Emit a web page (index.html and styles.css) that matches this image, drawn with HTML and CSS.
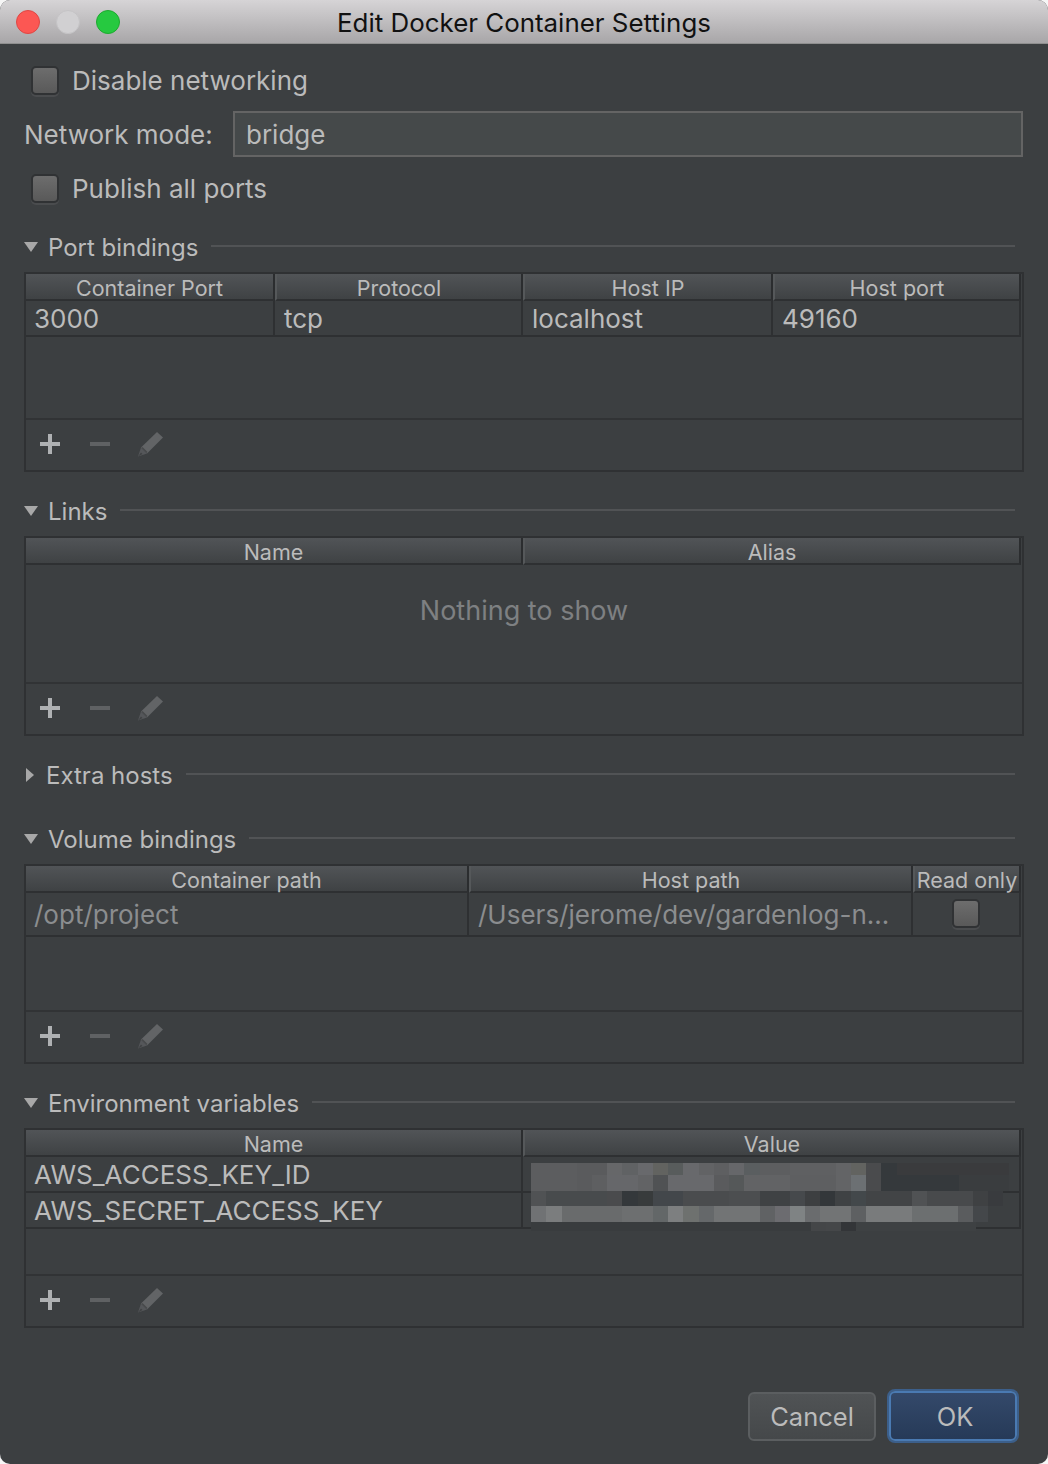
FILE: index.html
```html
<!DOCTYPE html>
<html>
<head>
<title>Edit Docker Container Settings</title>
<link rel="stylesheet" href="styles.css">
</head>

<body>
<svg width="0" height="0" class="defs">
	<symbol id="ic-plus" viewBox="0 0 22 22"><path d="M9 1h4v8h8v4h-8v8H9v-8H1V9h8z" fill="#afb1b3"/></symbol>
	<symbol id="ic-minus" viewBox="0 0 22 22"><path d="M1 9h20v4H1z" fill="#5f6163"/></symbol>
	<symbol id="ic-pencil" viewBox="0 0 26 26"><path d="M19 1l6 5.500L9 22.500 3 16.500z" fill="#626466"/><path d="M3 16.500l6 6-9 3z" fill="#55575a"/><path d="M3.500 17l5 5 1-1-5-5z" fill="#47494b"/><path d="M0 25.500l3-4 1.500 1.500z" fill="#3f4143"/></symbol>
</svg>

<div class="window">
	<div class="titlebar">
		<div class="lights">
			<span class="light red"></span>
			<span class="light grey"></span>
			<span class="light green"></span>
		</div>
		<div class="title">Edit Docker Container Settings</div>
	</div>

	<div class="content">
		<div class="form-row">
			<span class="check"></span><span>Disable networking</span>
		</div>
		<div class="form-row mode-row">
			<span>Network mode:</span>
			<div class="field">bridge</div>
		</div>
		<div class="form-row">
			<span class="check"></span><span>Publish all ports</span>
		</div>

		<div class="section-title first"><span class="arrow-down"></span><span>Port bindings</span><span class="rule"></span></div>
		<div class="panel">
			<div class="tbl four">
				<div class="th">Container Port</div><div class="th">Protocol</div><div class="th">Host IP</div><div class="th">Host port</div>
				<div class="td lead">3000</div><div class="td">tcp</div><div class="td">localhost</div><div class="td">49160</div>
			</div>
			<div class="filler"></div>
			<div class="toolbar">
				<svg class="ic"><use href="#ic-plus"/></svg>
				<svg class="ic"><use href="#ic-minus"/></svg>
				<svg class="ic pencil"><use href="#ic-pencil"/></svg>
			</div>
		</div>

		<div class="section-title"><span class="arrow-down"></span><span>Links</span><span class="rule"></span></div>
		<div class="panel">
			<div class="tbl two">
				<div class="th">Name</div><div class="th">Alias</div>
			</div>
			<div class="filler empty">Nothing to show</div>
			<div class="toolbar">
				<svg class="ic"><use href="#ic-plus"/></svg>
				<svg class="ic"><use href="#ic-minus"/></svg>
				<svg class="ic pencil"><use href="#ic-pencil"/></svg>
			</div>
		</div>

		<div class="section-title"><span class="arrow-right"></span><span>Extra hosts</span><span class="rule"></span></div>

		<div class="section-title gap-small"><span class="arrow-down"></span><span>Volume bindings</span><span class="rule"></span></div>
		<div class="panel">
			<div class="tbl vols">
				<div class="th">Container path</div><div class="th">Host path</div><div class="th">Read only</div>
				<div class="td tall dim lead">/opt/project</div><div class="td tall dim">/Users/jerome/dev/gardenlog-n...</div><div class="td tall center"><span class="check small"></span></div>
			</div>
			<div class="filler"></div>
			<div class="toolbar">
				<svg class="ic"><use href="#ic-plus"/></svg>
				<svg class="ic"><use href="#ic-minus"/></svg>
				<svg class="ic pencil"><use href="#ic-pencil"/></svg>
			</div>
		</div>

		<div class="section-title"><span class="arrow-down"></span><span>Environment variables</span><span class="rule"></span></div>
		<div class="panel">
			<div class="tbl two env">
				<div class="th">Name</div><div class="th">Value</div>
				<div class="td lead">AWS_ACCESS_KEY_ID</div><div class="td"></div>
				<div class="td lead">AWS_SECRET_ACCESS_KEY</div><div class="td"></div>
				<!-- blurred out secret values -->
				<svg class="mosaic" width="480" height="68" shape-rendering="crispEdges">
					<g>
						<rect x="0" y="0" width="46" height="12" fill="#5c5d5f"/><rect x="46" y="0" width="30" height="12" fill="#5a5b5d"/><rect x="76" y="0" width="15" height="12" fill="#666769"/><rect x="91" y="0" width="16" height="12" fill="#606264"/><rect x="107" y="0" width="15" height="12" fill="#68696c"/><rect x="122" y="0" width="15" height="12" fill="#626360"/><rect x="137" y="0" width="15" height="12" fill="#585c5c"/><rect x="152" y="0" width="16" height="12" fill="#68696c"/><rect x="168" y="0" width="15" height="12" fill="#626365"/><rect x="183" y="0" width="15" height="12" fill="#5e5f61"/><rect x="198" y="0" width="15" height="12" fill="#66676a"/><rect x="213" y="0" width="16" height="12" fill="#5a5e60"/><rect x="229" y="0" width="30" height="12" fill="#5d5e60"/><rect x="259" y="0" width="46" height="12" fill="#5f6062"/><rect x="305" y="0" width="15" height="12" fill="#636466"/><rect x="320" y="0" width="15" height="12" fill="#626360"/><rect x="335" y="0" width="15" height="12" fill="#4a4b4d"/><rect x="350" y="0" width="16" height="12" fill="#35393c"/><rect x="366" y="0" width="112" height="12" fill="#3a3b3d"/>
					</g>
					<g>
						<rect x="0" y="12" width="46" height="16" fill="#5c5d5f"/><rect x="46" y="12" width="15" height="16" fill="#5a5b5d"/><rect x="61" y="12" width="15" height="16" fill="#5e5f61"/><rect x="76" y="12" width="31" height="16" fill="#66676a"/><rect x="107" y="12" width="15" height="16" fill="#626365"/><rect x="122" y="12" width="15" height="16" fill="#505254"/><rect x="137" y="12" width="46" height="16" fill="#68696c"/><rect x="183" y="12" width="15" height="16" fill="#5a5b5d"/><rect x="198" y="12" width="15" height="16" fill="#555859"/><rect x="213" y="12" width="46" height="16" fill="#626365"/><rect x="259" y="12" width="46" height="16" fill="#5e5f61"/><rect x="305" y="12" width="15" height="16" fill="#636466"/><rect x="320" y="12" width="15" height="16" fill="#6c7073"/><rect x="335" y="12" width="15" height="16" fill="#4a4b4d"/><rect x="350" y="12" width="78" height="16" fill="#35393c"/><rect x="428" y="12" width="50" height="16" fill="#3a3d3f"/>
					</g>
					<g>
						<rect x="0" y="28" width="15" height="15" fill="#505254"/><rect x="15" y="28" width="61" height="15" fill="#484b4d"/><rect x="76" y="28" width="15" height="15" fill="#4a4b4d"/><rect x="91" y="28" width="16" height="15" fill="#34383b"/><rect x="107" y="28" width="15" height="15" fill="#383b3c"/><rect x="122" y="28" width="30" height="15" fill="#43474b"/><rect x="152" y="28" width="46" height="15" fill="#4a4c4e"/><rect x="198" y="28" width="31" height="15" fill="#4c4e50"/><rect x="229" y="28" width="30" height="15" fill="#3f4244"/><rect x="259" y="28" width="15" height="15" fill="#46494c"/><rect x="274" y="28" width="15" height="15" fill="#3d3f41"/><rect x="289" y="28" width="15" height="15" fill="#33373a"/><rect x="304" y="28" width="16" height="15" fill="#3f4244"/><rect x="320" y="28" width="15" height="15" fill="#43484b"/><rect x="335" y="28" width="46" height="15" fill="#424446"/><rect x="381" y="28" width="15" height="15" fill="#505254"/><rect x="396" y="28" width="46" height="15" fill="#484a4c"/><rect x="442" y="28" width="15" height="15" fill="#3f4143"/><rect x="457" y="28" width="15" height="15" fill="#393b3e"/>
					</g>
					<g>
						<rect x="0" y="43" width="15" height="16" fill="#707274"/><rect x="15" y="43" width="16" height="16" fill="#7b7d7e"/><rect x="31" y="43" width="60" height="16" fill="#696b6c"/><rect x="91" y="43" width="31" height="16" fill="#6d6f70"/><rect x="122" y="43" width="15" height="16" fill="#636768"/><rect x="137" y="43" width="15" height="16" fill="#7d7f80"/><rect x="152" y="43" width="16" height="16" fill="#6e716f"/><rect x="168" y="43" width="15" height="16" fill="#65686a"/><rect x="183" y="43" width="46" height="16" fill="#727475"/><rect x="229" y="43" width="15" height="16" fill="#606264"/><rect x="244" y="43" width="15" height="16" fill="#6c6c70"/><rect x="259" y="43" width="15" height="16" fill="#7f8384"/><rect x="274" y="43" width="15" height="16" fill="#6a6c6e"/><rect x="289" y="43" width="31" height="16" fill="#727475"/><rect x="320" y="43" width="15" height="16" fill="#5e6062"/><rect x="335" y="43" width="46" height="16" fill="#797b7c"/><rect x="381" y="43" width="46" height="16" fill="#6c6f70"/><rect x="427" y="43" width="15" height="16" fill="#5a5c5e"/><rect x="442" y="43" width="15" height="16" fill="#44474a"/>
					</g>
					<rect x="0" y="59" width="280" height="9" fill="#393c3e"/><rect x="280" y="59" width="15" height="9" fill="#444648"/><rect x="295" y="59" width="15" height="9" fill="#454749"/><rect x="310" y="59" width="15" height="9" fill="#333538"/><rect x="325" y="59" width="120" height="9" fill="#3e4143"/>
				</svg>
			</div>
			<div class="filler"></div>
			<div class="toolbar">
				<svg class="ic"><use href="#ic-plus"/></svg>
				<svg class="ic"><use href="#ic-minus"/></svg>
				<svg class="ic pencil"><use href="#ic-pencil"/></svg>
			</div>
		</div>

		<div class="buttons">
			<div class="btn">Cancel</div>
			<div class="btn btn-ok">OK</div>
		</div>
	</div>
</div>
</body>
</html>
```

FILE: styles.css
```css
* {
	box-sizing: border-box;
}

body {
	margin: 0px;
	background: #f6f6f6;
	font-family: Inter, "Liberation Sans", sans-serif;
}

.defs {
	display: block;
	height: 0;
}

.window {
	width: 1048px;
	height: 1464px;
	background: #3c3f41;
	border-radius: 10px;
	overflow: hidden;
	display: flex;
	flex-direction: column;
	color: #bbbbbb;
	font-size: 26px;
}

.titlebar {
	height: 44px;
	flex: none;
	padding-top: 1px;
	display: flex;
	align-items: center;
	justify-content: center;
	position: relative;
	background: linear-gradient(#d6d4d6, #a8a6a8);
	border-bottom: 1px solid #8f8f8f;
	color: #111111;
}

.title {
	font-size: 25.9px;
}

.lights {
	position: absolute;
	left: 16px;
	top: 10px;
	display: flex;
	gap: 16px;
}

.light {
	width: 24px;
	height: 24px;
	border-radius: 50%;
}

.red {
	background: #fc5753;
	border: 1px solid #df4744;
}

.grey {
	background: #d1d0d2;
	border: 1px solid #c4c3c5;
}

.green {
	background: #26c940;
	border: 1px solid #1daa2f;
}

.content {
	flex: 1;
	padding: 9px 24px 0;
	display: flex;
	flex-direction: column;
}

.form-row {
	height: 54px;
	flex: none;
	display: flex;
	align-items: center;
}

.check {
	width: 28px;
	height: 29px;
	margin: 0 13px 0 7px;
	flex: none;
	border: 2px solid #303234;
	border-radius: 5px;
	background: linear-gradient(#6d6d6d, #595959);
	box-shadow: 0 2px 0 #4a4c4e;
}

.check.small {
	margin: 0;
}

.mode-row {
	justify-content: space-between;
}

.field {
	width: 790px;
	height: 46px;
	margin-right: 1px;
	padding-left: 11px;
	display: flex;
	align-items: center;
	background: #45494a;
	border: 2px solid #646464;
}

.section-title {
	height: 26px;
	flex: none;
	margin-top: 26px;
	display: flex;
	align-items: center;
	font-size: 24px;
}

.section-title.first {
	margin-top: 19px;
}

.section-title.gap-small {
	margin-top: 38px;
}

.arrow-down {
	width: 0;
	height: 0;
	margin-right: 10px;
	border-left: 7px solid transparent;
	border-right: 7px solid transparent;
	border-top: 10px solid #a8a8a8;
}

.arrow-right {
	width: 0;
	height: 0;
	margin: 0 12px 0 2px;
	border-top: 7px solid transparent;
	border-bottom: 7px solid transparent;
	border-left: 8px solid #a8a8a8;
}

.rule {
	flex: 1;
	height: 2px;
	margin: -2px 9px 0 13px;
	background: #515355;
}

.panel {
	height: 200px;
	flex: none;
	margin-top: 12px;
	display: flex;
	flex-direction: column;
	border: 2px solid #2f3133;
}

.tbl {
	display: grid;
	position: relative;
	margin-right: 1px;
	flex: none;
}

.four {
	grid-template-columns: 249px 248px 250px 1fr;
}

.two {
	grid-template-columns: 497px 1fr;
}

.vols {
	grid-template-columns: 443px 444px 1fr;
}

.th {
	height: 27px;
	text-align: center;
	font-size: 21.5px;
	line-height: 28px;
	background: linear-gradient(#515457, #3f4244);
	border-right: 2px solid #2b2d2f;
	border-bottom: 2px solid #2e3032;
	white-space: nowrap;
}

.th + .th {
	border-left: 2px solid #55585a;
}

.td {
	height: 36px;
	padding-left: 9px;
	font-size: 26px;
	line-height: 35px;
	border-right: 2px solid #2e3032;
	border-bottom: 2px solid #2e3032;
	white-space: nowrap;
	overflow: hidden;
}

.lead {
	padding-left: 8px;
}

.tall {
	height: 44px;
	line-height: 43px;
}

.dim {
	color: #8b8d8f;
}

.center {
	display: flex;
	align-items: center;
	justify-content: center;
	padding: 0 0 2px;
}

.mosaic {
	position: absolute;
	left: 505px;
	top: 33px;
}

.filler {
	flex: 1;
}

.empty {
	display: flex;
	align-items: center;
	justify-content: center;
	padding-bottom: 26px;
	font-size: 27px;
	color: #7e8082;
}

.toolbar {
	height: 52px;
	flex: none;
	padding: 0 0 2px 13px;
	display: flex;
	align-items: center;
	gap: 28px;
	border-top: 2px solid #313335;
}

.ic {
	width: 22px;
	height: 22px;
}

.pencil {
	width: 26px;
	height: 26px;
	margin-left: -1px;
}

.buttons {
	margin: 63px 7px 0 0;
	display: flex;
	justify-content: flex-end;
	align-items: center;
	gap: 13px;
	font-size: 25.5px;
}

.btn {
	width: 128px;
	height: 49px;
	display: flex;
	align-items: center;
	justify-content: center;
	border: 2px solid #5b5e60;
	border-radius: 6px;
	background: linear-gradient(#505355, #45484a);
}

.btn-ok {
	width: 128px;
	height: 50px;
	padding-left: 4px;
	border: 2px solid #4a7ab2;
	background: linear-gradient(#34496a, #263a58);
	box-shadow: 0 0 0 2px #3c5f8a;
}
```
